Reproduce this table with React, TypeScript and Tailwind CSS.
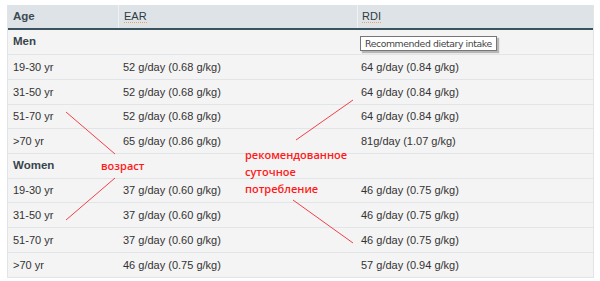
import React from "react";

const rows: { type: "group" | "row"; age: string; ear?: string; rdi?: string; h: number }[] = [
  { type: "group", age: "Men", h: 25 },
  { type: "row", age: "19-30 yr", ear: "52 g/day (0.68 g/kg)", rdi: "64 g/day (0.84 g/kg)", h: 25 },
  { type: "row", age: "31-50 yr", ear: "52 g/day (0.68 g/kg)", rdi: "64 g/day (0.84 g/kg)", h: 25 },
  { type: "row", age: "51-70 yr", ear: "52 g/day (0.68 g/kg)", rdi: "64 g/day (0.84 g/kg)", h: 24 },
  { type: "row", age: ">70 yr", ear: "65 g/day (0.86 g/kg)", rdi: "81g/day (1.07 g/kg)", h: 25 },
  { type: "group", age: "Women", h: 25 },
  { type: "row", age: "19-30 yr", ear: "37 g/day (0.60 g/kg)", rdi: "46 g/day (0.75 g/kg)", h: 24 },
  { type: "row", age: "31-50 yr", ear: "37 g/day (0.60 g/kg)", rdi: "46 g/day (0.75 g/kg)", h: 25 },
  { type: "row", age: "51-70 yr", ear: "37 g/day (0.60 g/kg)", rdi: "46 g/day (0.75 g/kg)", h: 25 },
  { type: "row", age: ">70 yr", ear: "46 g/day (0.75 g/kg)", rdi: "57 g/day (0.94 g/kg)", h: 24 },
];

export default function App() {
  return (
    <div className="relative w-[600px] h-[281px] bg-white overflow-hidden" style={{ fontFamily: '"Liberation Sans", Arial, sans-serif' }}>
      <div className="ml-[7px] mt-[5px] w-[587px] border-l border-r border-b border-[#e1e5e7] bg-[#f4f4f4]">
        {/* header */}
        <div className="grid grid-cols-[110px_239px_1fr] h-[25px] bg-[#dde3e6] border-b-2 border-[#3b535e] text-[11px]">
          <div className="flex items-center pl-[5px] font-bold text-[#3c4a52] text-[11.5px]">Age</div>
          <div className="flex items-center pl-[5px] border-l border-[#eef2f3] text-[#2f3b41]">
            <span className="border-b border-dotted border-[#f0a060] leading-[12px]">EAR</span>
          </div>
          <div className="flex items-center pl-[4px] border-l border-[#eef2f3] text-[#2f3b41]">
            <span className="border-b border-dotted border-[#f0a060] leading-[12px]">RDI</span>
          </div>
        </div>
        {rows.map((r, i) => (
          <div
            key={i}
            className={`grid grid-cols-[110px_239px_1fr] items-center text-[11px] text-[#333] ${i < rows.length - 1 ? "border-b border-[#e1e5e7]" : ""}`}
            style={{ height: r.h }}
          >
            {r.type === "group" ? (
              <div className="pl-[5px] font-bold text-[#37454c] text-[11.5px]">{r.age}</div>
            ) : (
              <>
                <div className="pl-[5px]">{r.age}</div>
                <div className="pl-[5px]">{r.ear}</div>
                <div className="pl-[4px]">{r.rdi}</div>
              </>
            )}
          </div>
        ))}
      </div>

      {/* tooltip */}
      <div
        className="absolute left-[360px] top-[36px] h-[15px] px-[4px] flex items-center bg-white border border-[#767676] text-[9.3px] text-[#444] shadow-[2px_2px_1px_rgba(0,0,0,0.25)]"
        style={{ fontFamily: '"DejaVu Sans", "Liberation Sans", sans-serif', letterSpacing: "-0.4px" }}
      >
        Recommended dietary intake
      </div>

      {/* annotation lines */}
      <svg className="absolute left-0 top-0 pointer-events-none" width="600" height="281" viewBox="0 0 600 281">
        <g stroke="#f2404a" strokeWidth="1" fill="none">
          <line x1="66" y1="112" x2="115" y2="154" />
          <line x1="115" y1="178" x2="66" y2="220" />
          <line x1="353" y1="100" x2="296" y2="140" />
          <line x1="293" y1="200" x2="353" y2="243" />
        </g>
      </svg>

      {/* annotation texts */}
      <div
        className="absolute left-[101px] top-[157px] text-[11px] font-semibold leading-[17px] text-[#ff1a1a]"
        style={{ fontFamily: '"Open Sans", "Noto Sans", sans-serif' }}
      >
        возраст
      </div>
      <div
        className="absolute left-[245px] top-[146px] text-[11px] font-semibold leading-[17px] text-[#ff1a1a]"
        style={{ fontFamily: '"Open Sans", "Noto Sans", sans-serif' }}
      >
        <div>рекомендованное</div>
        <div>суточное</div>
        <div>потребление</div>
      </div>
    </div>
  );
}
